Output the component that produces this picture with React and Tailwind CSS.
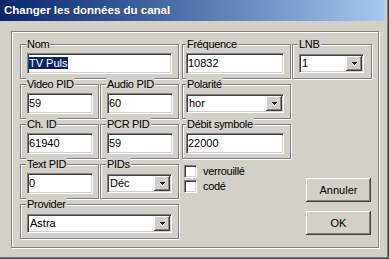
import React from 'react'

const etched = 'border border-[#808080] shadow-[inset_1px_1px_0_#fff,1px_1px_0_#fff]'
const sunken =
  'border border-t-[#808080] border-l-[#808080] border-r-white border-b-white shadow-[inset_1px_1px_0_#404040,inset_-1px_-1px_0_#d4d0c8] bg-white'
const raised =
  'bg-[#d4d0c8] shadow-[inset_-1px_-1px_0_#404040,inset_1px_1px_0_#fff,inset_-2px_-2px_0_#808080]'

function Group({ label, className, labelPos = 'left-[5px]', children }) {
  return (
    <div className={`relative h-[35px] ${etched} ${className}`}>
      <span className={`absolute -top-[7px] ${labelPos} bg-[#d4d0c8] px-px leading-[13px] tracking-[-0.3px]`}>
        {label}
      </span>
      {children}
    </div>
  )
}

function Edit({ className, children }) {
  return <div className={`h-[21px] ${sunken} pl-px pt-[2px] leading-[14px] ${className}`}>{children}</div>
}

// small combo-box arrow, drawn pixel by pixel
function Arrow() {
  return (
    <svg width="5" height="3" viewBox="0 0 5 3" shapeRendering="crispEdges">
      <rect x="0" y="0" width="5" height="1" fill="#000" />
      <rect x="1" y="1" width="3" height="1" fill="#000" />
      <rect x="2" y="2" width="1" height="1" fill="#000" />
    </svg>
  )
}

function Select({ value, className }) {
  return (
    <div className={`flex h-[19px] ${sunken} p-px ${className}`}>
      <span className="flex-1 pl-[1px] leading-[15px]">{value}</span>
      <div className={`flex w-[16px] items-center justify-center ${raised}`}>
        <Arrow />
      </div>
    </div>
  )
}

function Check({ label }) {
  return (
    <div className="flex items-center gap-[6px]">
      <div className={`h-[13px] w-[13px] ${sunken}`} />
      <span className="leading-[13px] tracking-[-0.3px]">{label}</span>
    </div>
  )
}

function Button({ children, className }) {
  return (
    <div className={`flex h-[24px] w-[65px] items-center justify-center ${raised} ${className}`}>{children}</div>
  )
}

export default function App() {
  return (
    <div className="relative h-[259px] w-[389px] overflow-hidden bg-[#d4d0c8] font-[family-name:Liberation_Sans,Arial,sans-serif] text-[11px] text-black shadow-[inset_-1px_-1px_0_#404040,inset_-2px_-2px_0_#808080]">
      <div className="flex h-[21px] w-[385px] items-center bg-gradient-to-r from-[#0a246a] to-[#a6caf0] pl-[4px] text-[11.5px] font-bold text-white">
        Changer les données du canal
      </div>

      <div className={`ml-[11px] mt-[10px] h-[217px] w-[368px] pl-[8px] pt-[12px] ${etched}`}>
        <div className="grid grid-cols-[80px_82px_110px_80px] grid-rows-[35px_35px_35px_35px_35px] gap-y-[5px]">
          <Group label="Nom" className="col-span-2 col-start-1 w-[159px] pl-[6px] pt-[8px]">
            <Edit className="w-[145px]">
              <span className="bg-[#0a246a] text-white">TV Puls</span>
            </Edit>
          </Group>
          <Group label="Fréquence" labelPos="left-[3px]" className="w-[109px] pl-[3px] pt-[8px]">
            <Edit className="w-[98px]">10832</Edit>
          </Group>
          <Group label="LNB" className="w-[80px] pl-[6px] pt-[9px]">
            <Select value="1" className="w-[65px]" />
          </Group>

          <Group label="Video PID" className="col-start-1 w-[79px] pl-[6px] pt-[8px]">
            <Edit className="w-[66px]">59</Edit>
          </Group>
          <Group label="Audio PID" className="w-[79px] pl-[6px] pt-[8px]">
            <Edit className="w-[66px]">60</Edit>
          </Group>
          <Group label="Polarité" labelPos="left-[3px]" className="w-[109px] pl-[3px] pt-[9px]">
            <Select value="hor" className="w-[98px]" />
          </Group>

          <Group label="Ch. ID" className="col-start-1 w-[79px] pl-[6px] pt-[8px]">
            <Edit className="w-[66px]">61940</Edit>
          </Group>
          <Group label="PCR PID" className="w-[79px] pl-[6px] pt-[8px]">
            <Edit className="w-[66px]">59</Edit>
          </Group>
          <Group label="Débit symbole" labelPos="left-[3px]" className="w-[109px] pl-[3px] pt-[8px]">
            <Edit className="w-[98px]">22000</Edit>
          </Group>

          <Group label="Text PID" className="col-start-1 w-[79px] pl-[6px] pt-[8px]">
            <Edit className="w-[66px]">0</Edit>
          </Group>
          <Group label="PIDs" className="w-[79px] pl-[6px] pt-[9px]">
            <Select value="Déc" className="w-[65px]" />
          </Group>
          <div className="flex flex-col gap-[2px] pl-[2px] pt-[1px]">
            <Check label="verrouillé" />
            <Check label="codé" />
          </div>
          <div className="row-span-2 flex flex-col gap-[9px] pl-[14px] pt-[14px]">
            <Button>Annuler</Button>
            <Button>OK</Button>
          </div>

          <Group label="Provider" className="col-span-2 col-start-1 w-[159px] pl-[6px] pt-[9px]">
            <Select value="Astra" className="w-[145px]" />
          </Group>
        </div>
      </div>
    </div>
  )
}
